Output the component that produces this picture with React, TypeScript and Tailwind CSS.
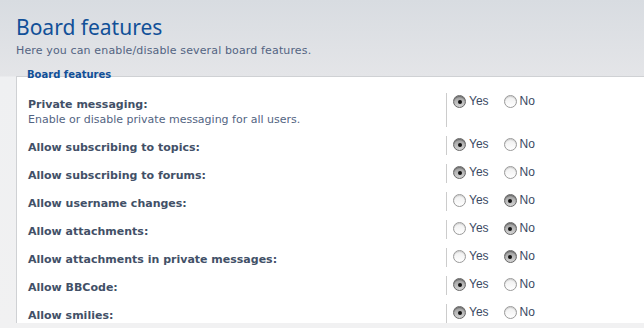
import React from "react";

type Row = { label: string; desc?: string; yes: boolean };

const rows: Row[] = [
  { label: "Private messaging:", desc: "Enable or disable private messaging for all users.", yes: true },
  { label: "Allow subscribing to topics:", yes: true },
  { label: "Allow subscribing to forums:", yes: true },
  { label: "Allow username changes:", yes: false },
  { label: "Allow attachments:", yes: false },
  { label: "Allow attachments in private messages:", yes: false },
  { label: "Allow BBCode:", yes: true },
  { label: "Allow smilies:", yes: true },
];

function Radio({ checked }: { checked: boolean }) {
  return checked ? (
    <span className="relative inline-flex h-[13px] w-[13px] shrink-0 items-center justify-center rounded-full border border-[#666] bg-[linear-gradient(to_bottom,#9c9c9c,#d4d4d4)] shadow-[inset_0_1px_1px_rgba(0,0,0,0.35)]">
      <span className="h-[4px] w-[4px] rounded-full bg-[#111]" />
    </span>
  ) : (
    <span className="inline-block h-[13px] w-[13px] shrink-0 rounded-full border border-[#9a9a9a] bg-[linear-gradient(to_bottom,#eeeeee,#ffffff)] shadow-[inset_0_1px_1px_rgba(0,0,0,0.15)]" />
  );
}

export default function App() {
  return (
    <div className="h-[328px] w-[644px] overflow-hidden bg-[linear-gradient(to_bottom,#d8dce1_0px,#e4e5e8_76px,#eff0f2_77px,#f1f1f2_328px)] font-['DejaVu_Sans',sans-serif]">
      <div className="pl-4 pt-[14px]">
        <h1 className="text-[21px] leading-[26px] text-[#115098] font-['Noto_Sans',sans-serif]">Board features</h1>
        <p className="mt-[4px] text-[11px] leading-[14px] tracking-[0.14px] text-[#536482]">
          Here you can enable/disable several board features.
        </p>
      </div>
      <div className="relative z-10 mt-[11px] pl-[27px] text-[10px] font-bold leading-[12px] text-[#115098]">
        Board features
      </div>
      <div className="-mt-[5px] ml-4 border-l border-t border-[#cfd1d4] bg-white pt-[16px]">
        {rows.map((r, i) => (
          <div key={i} className="mb-[9px] flex">
            <div className="w-[430px] shrink-0 border-r border-[#cccccc] pl-[11px] pt-[4px] text-[11px] leading-[15px] text-[#425067]">
              <div className="font-bold">{r.label}</div>
              {r.desc && <div className="text-[#536482]">{r.desc}</div>}
            </div>
            <div className="flex items-start pl-[6px] pt-[2px] font-['Liberation_Sans',sans-serif] text-[12px] leading-[13px] text-[#3b4a63]">
              <label className="flex items-center gap-[3px]">
                <Radio checked={r.yes} />
                <span>Yes</span>
              </label>
              <label className="ml-[15px] flex items-center gap-[3px]">
                <Radio checked={!r.yes} />
                <span>No</span>
              </label>
            </div>
          </div>
        ))}
      </div>
    </div>
  );
}
